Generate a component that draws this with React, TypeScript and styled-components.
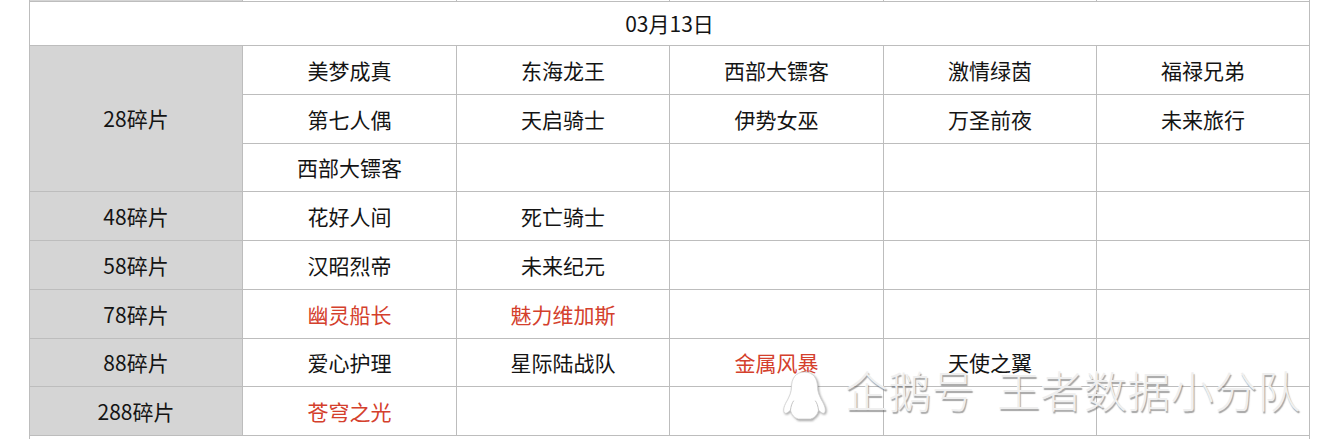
import React from "react";
import styled, { createGlobalStyle } from "styled-components";

const Global = createGlobalStyle`
  html, body {
    margin: 0;
    padding: 0;
    background: #ffffff;
    overflow: hidden;
    height: 439px;
  }
  body {
    font-family: "Noto Sans CJK SC", "Noto Sans", sans-serif;
  }
`;

const Page = styled.div`
  position: relative;
  width: 1334px;
  height: 439px;
  overflow: hidden;
`;

const Grid = styled.div`
  margin-left: 29px;
  width: fit-content;
  display: grid;
  grid-template-columns: 212px 213px 212px 213px 212px 212px;
  grid-template-rows: 1px 43px 48px 48px 47px 48px 48px 48px 47px 48px 20px;
  gap: 1px;
  padding: 0 1px;
  background: #bdbdbd;
`;

const Cell = styled.div<{ $gray?: boolean; $red?: boolean; $span?: number; $rows?: number }>`
  background: ${(p) => (p.$gray ? "#d5d5d5" : "#ffffff")};
  color: ${(p) => (p.$red ? "#d4402c" : "#141414")};
  grid-column: ${(p) => (p.$span ? `span ${p.$span}` : "auto")};
  grid-row: ${(p) => (p.$rows ? `span ${p.$rows}` : "auto")};
  display: flex;
  align-items: center;
  justify-content: center;
  font-size: 21px;
  line-height: 1;
  padding-top: 0;
  box-sizing: border-box;
  overflow: hidden;
  white-space: nowrap;
`;

const Watermark = styled.div`
  position: absolute;
  left: 781px;
  top: 368px;
  display: flex;
  align-items: flex-start;
  pointer-events: none;
`;

const WmText = styled.span<{ $gap?: number }>`
  font-family: "Noto Sans CJK SC", sans-serif;
  font-weight: 300;
  font-size: 43px;
  line-height: 1;
  letter-spacing: 0.4px;
  color: #efefef;
  margin-left: ${(p) => p.$gap ?? 0}px;
  text-shadow: 1px 1.5px 1px rgba(90, 90, 90, 0.55), -0.5px -0.5px 0 #ffffff;
`;

const Penguin = styled.svg`
  width: 47px;
  height: 52px;
  margin-top: 3px;
  filter: drop-shadow(1px 1.5px 1px rgba(90, 90, 90, 0.55));
`;

type Item = { t: string; red?: boolean };
type Group = { label: string; rows: Item[][] };

const r = (t: string): Item => ({ t, red: true });
const b = (t: string): Item => ({ t });

const groups: Group[] = [
  {
    label: "28碎片",
    rows: [
      [b("美梦成真"), b("东海龙王"), b("西部大镖客"), b("激情绿茵"), b("福禄兄弟")],
      [b("第七人偶"), b("天启骑士"), b("伊势女巫"), b("万圣前夜"), b("未来旅行")],
      [b("西部大镖客"), b(""), b(""), b(""), b("")],
    ],
  },
  { label: "48碎片", rows: [[b("花好人间"), b("死亡骑士"), b(""), b(""), b("")]] },
  { label: "58碎片", rows: [[b("汉昭烈帝"), b("未来纪元"), b(""), b(""), b("")]] },
  { label: "78碎片", rows: [[r("幽灵船长"), r("魅力维加斯"), b(""), b(""), b("")]] },
  { label: "88碎片", rows: [[b("爱心护理"), b("星际陆战队"), r("金属风暴"), b("天使之翼"), b("")]] },
  { label: "288碎片", rows: [[r("苍穹之光"), b(""), b(""), b(""), b("")]] },
];

export default function App() {
  return (
    <Page>
      <Global />
      <Grid>
        <Cell $gray />
        <Cell />
        <Cell />
        <Cell />
        <Cell />
        <Cell />
        <Cell $span={6}>03月13日</Cell>
        {groups.map((g) => (
          <React.Fragment key={g.label}>
            <Cell $gray $rows={g.rows.length}>
              {g.label}
            </Cell>
            {g.rows.map((row, ri) =>
              row.map((it, ci) => (
                <Cell key={`${g.label}-${ri}-${ci}`} $red={it.red}>
                  {it.t}
                </Cell>
              ))
            )}
          </React.Fragment>
        ))}
        <Cell $span={6} />
      </Grid>
      <Watermark>
        <Penguin viewBox="0 0 47 52">
          <path
            d="M23.5 1 C14.5 1 10.5 8 10.5 16 C10.5 21 8.5 25 6.5 29 C3.5 34 1.5 39 3.5 42 C5.5 43 7.5 41 9.5 39 C10.5 44 13.5 47 17.5 48 L29.5 48 C33.5 47 36.5 44 37.5 39 C39.5 41 41.5 43 43.5 42 C45.5 39 43.5 34 40.5 29 C38.5 25 36.5 21 36.5 16 C36.5 8 32.5 1 23.5 1 Z"
            fill="#ffffff"
            stroke="#cfcfcf"
            strokeWidth="0.8"
          />
          <path
            d="M9.5 39 C10 35 11 32 12.5 30 M37.5 39 C37 35 36 32 34.5 30 M16 48.5 L31 48.5"
            fill="none"
            stroke="#bdbdbd"
            strokeWidth="0.9"
            strokeLinecap="round"
          />
        </Penguin>
        <WmText $gap={17}>企鹅号</WmText>
        <WmText $gap={22}>王者数据小分队</WmText>
      </Watermark>
    </Page>
  );
}
